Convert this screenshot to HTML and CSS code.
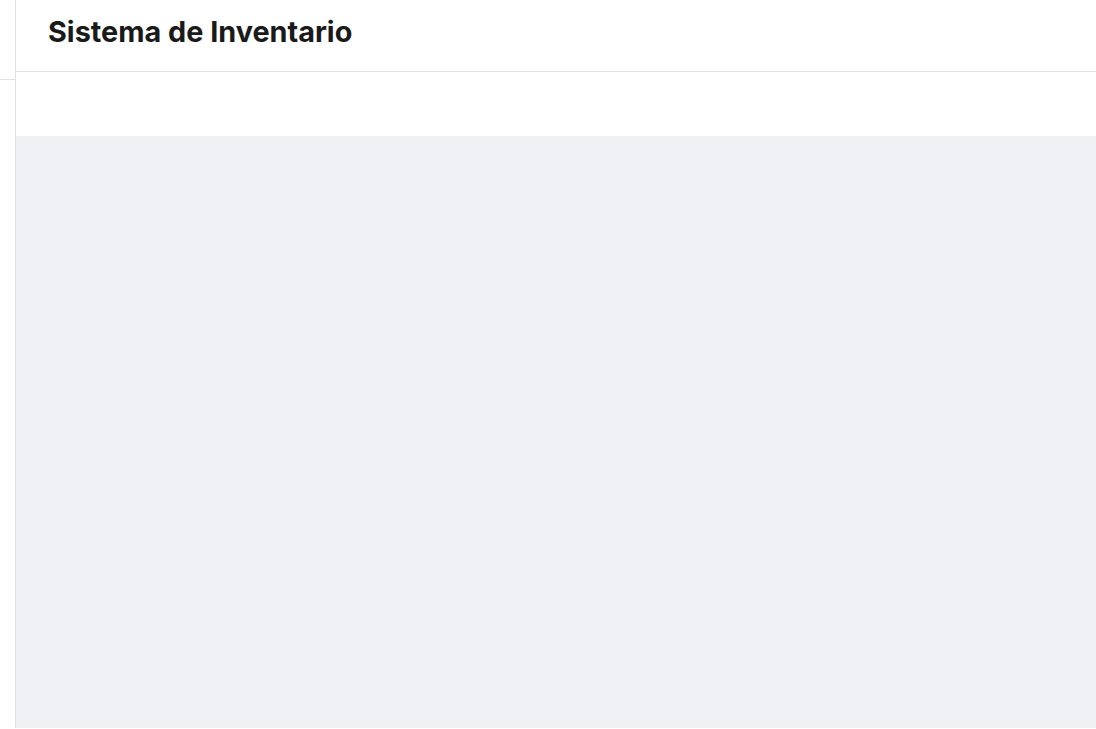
FILE: index.html
```html
<!DOCTYPE html>
<html lang="es">
<head>
    <meta charset="UTF-8">
    <meta name="viewport" content="width=device-width, initial-scale=1.0">
    <title>Sistema de Inventario</title>
    <link rel="stylesheet" href="styles.css">
</head>
<body>
    <div class="layout">
        <aside class="sidebar">
            <div class="sidebar-top"></div>
        </aside>

        <div class="main">
            <header class="header">
                <h1 class="title">Sistema de Inventario</h1>
            </header>

            <div class="toolbar"></div>

            <main class="content"></main>
        </div>
    </div>
</body>
</html>
```

FILE: styles.css
```css
* {
    box-sizing: border-box;
}

body {
    margin: 0;
    font-family: "Inter", "Noto Sans", sans-serif;
    background: #fff;
    color: #1a1a1a;
}

.layout {
    display: flex;
    height: calc(100vh - 1px);
}

.sidebar {
    width: 16px;
    flex-shrink: 0;
    border-right: 1px solid #e2e2e4;
    background: #fff;
}
.sidebar-top {
    height: 80px;
    border-bottom: 1px solid #e2e2e4;
}

.main {
    flex: 1;
    display: flex;
    flex-direction: column;
    min-width: 0;
}

.header {
    height: 72px;
    padding: 14px 32px 0;
    border-bottom: 1px solid #e2e2e4;
}
.title {
    margin: 0;
    font-size: 1.8rem;
    font-weight: 700;
}

.toolbar {
    height: 64px;
    background: #fff;
}

.content {
    flex: 1;
    background: #f0f1f5;
}
```
